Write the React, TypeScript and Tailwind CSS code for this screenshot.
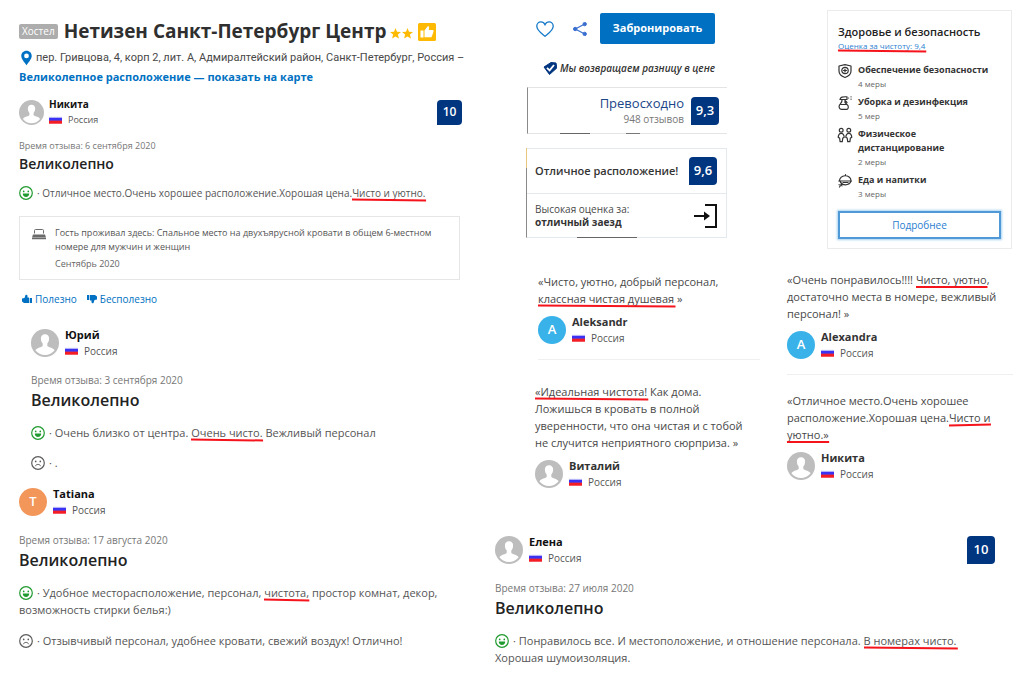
import type { ReactNode } from "react";

const POSITIVE = "text-[#1f9a2e]";
const NEGATIVE = "text-[#5c5c5c]";

function Mark({ children, tilt = 1 }: { children: ReactNode; tilt?: number }) {
  return (
    <span className="relative whitespace-nowrap">
      {children}
      <svg
        className="absolute top-full left-0 -mt-[2px] h-[4px] w-full overflow-visible"
        viewBox="0 0 100 4"
        preserveAspectRatio="none"
        aria-hidden="true"
      >
        <line x1="0" y1={2 - tilt / 2} x2="101" y2={2 + tilt / 2} stroke="#f5141c" strokeWidth="2" vectorEffect="non-scaling-stroke" />
      </svg>
    </span>
  );
}

function Flag() {
  return (
    <svg className="h-[8px] w-[13px] shrink-0" viewBox="0 0 14 8" aria-hidden="true">
      <rect width="14" height="8" fill="#f1f1fb" />
      <rect y="1.500" width="14" height="3.500" fill="#3a32f2" />
      <rect y="4.700" width="14" height="3.300" fill="#f51d24" />
    </svg>
  );
}

function Silhouette({ small }: { small?: boolean }) {
  return (
    <svg className={small ? "size-[25px] shrink-0" : "size-[28px] shrink-0"} viewBox="0 0 28 28" aria-hidden="true">
      <circle cx="14" cy="14" r="14" fill="#bdbdbd" />
      <path
        d="M14 5.2c-2.6 0-4.1 1.8-4.1 4.4 0 2.100.7 3.900 1.800 5v2c0 .8-.8 1.200-2.300 1.700-2.300.7-4.200 1.400-5 3a12 12 0 0 0 19.200 0c-.8-1.600-2.700-2.300-5-3-1.500-.5-2.300-.9-2.300-1.700v-2c1.100-1.100 1.800-2.900 1.800-5 0-2.600-1.500-4.400-4.100-4.400z"
        fill="#fff"
      />
    </svg>
  );
}

function Initial({ letter, color }: { letter: string; color: string }) {
  return (
    <span className={`flex size-[28px] shrink-0 items-center justify-center rounded-full text-[13px] font-semibold text-white ${color}`}>
      {letter}
    </span>
  );
}

function Person({ name, avatar, small, soft }: { name: string; avatar: ReactNode; small?: boolean; soft?: boolean }) {
  return (
    <div className={small ? "flex items-center gap-[5px]" : "flex items-center gap-[6px]"}>
      {avatar}
      <div className={small ? "leading-[15px]" : "leading-[16px]"}>
        <div className={`font-bold ${soft ? "text-[#333]" : "text-[#111]"} ${small ? "text-[10px]" : "text-[11px]"}`}>{name}</div>
        <div className={`flex items-center gap-[6px] text-[#555] ${small ? "text-[9px]" : "text-[10px]"}`}>
          <Flag />
          <span>Россия</span>
        </div>
      </div>
    </div>
  );
}

function Score({ value, small }: { value: string; small?: boolean }) {
  return (
    <span
      className={`flex shrink-0 items-center justify-center rounded-[4px] rounded-bl-none bg-[#003580] font-semibold text-white ${
        small ? "size-[25px] text-[12px]" : "size-[28px] text-[13px]"
      }`}
    >
      {value}
    </span>
  );
}

function Face({ sad }: { sad?: boolean }) {
  return (
    <svg
      className={`mr-[4px] inline-block size-[14px] -mt-[3px] ${sad ? NEGATIVE : POSITIVE}`}
      viewBox="0 0 14 14"
      fill="none"
      stroke="currentColor"
      aria-hidden="true"
    >
      <circle cx="7" cy="7" r="6.300" strokeWidth="1.200" />
      <circle cx="4.700" cy="5.400" r=".85" fill="currentColor" stroke="none" />
      <circle cx="9.300" cy="5.400" r=".85" fill="currentColor" stroke="none" />
      {sad ? (
        <path d="M4.300 10.200c.6-1.300 1.500-1.800 2.700-1.800s2.100.5 2.700 1.800" />
      ) : (
        <path d="M3.800 7.600h6.400c0 2-1.300 3.400-3.200 3.400s-3.200-1.400-3.200-3.400z" fill="currentColor" stroke="none" />
      )}
    </svg>
  );
}

function Comment({ sad, className, children }: { sad?: boolean; className: string; children: ReactNode }) {
  return (
    <p className={`text-[#555] ${className}`}>
      <Face sad={sad} />· {children}
    </p>
  );
}

function Quote({ lines, name, avatar }: { lines: ReactNode[]; name: string; avatar: ReactNode }) {
  return (
    <figure>
      <blockquote className="text-[11px] leading-[17px] text-[#484848]">
        {lines.map((line, i) => (
          <div key={i} className="whitespace-nowrap">
            {line}
          </div>
        ))}
      </blockquote>
      <figcaption className="mt-[7px]">
        <Person soft name={name} avatar={avatar} />
      </figcaption>
    </figure>
  );
}

function Measure({ icon, title, count }: { icon: ReactNode; title: ReactNode; count: string }) {
  return (
    <li className="flex gap-[6px]">
      <svg className="mt-px size-[14px] shrink-0 overflow-visible text-[#333]" viewBox="0 0 14 14" fill="none" stroke="currentColor" strokeWidth="1.200" strokeLinecap="round" strokeLinejoin="round" aria-hidden="true">
        {icon}
      </svg>
      <div>
        <div className="text-[9px] leading-[14px] font-bold whitespace-nowrap text-[#333]">{title}</div>
        <div className="text-[8px] leading-[13px] text-[#666]">{count}</div>
      </div>
    </li>
  );
}

function Thumb({ down }: { down?: boolean }) {
  return (
    <svg className={`size-[10px] ${down ? "rotate-180" : ""}`} viewBox="0 0 10 10" fill="currentColor" aria-hidden="true">
      <path d="M0 4.500 2.500 4l1-3Q5.500.3 5.500 2v1.500H7V9H2L0 7.500z" />
      <path d="M7.700 4H10v5H7.700z" />
    </svg>
  );
}

function HotelHeader() {
  return (
    <header>
      <div className="flex h-[30px] items-center whitespace-nowrap">
        <span className="rounded-[2px] bg-[#adadad] px-[3px] text-[10px] leading-[15px] text-white">Хостел</span>
        <h1 className="ml-[6px] text-[19px] leading-[30px] font-bold text-[#2f2f2f]">Нетизен Санкт-Петербург Центр</h1>
        <svg className="mt-[5px] ml-[4px] h-[11px] w-[23px]" viewBox="0 0 23 11" fill="#feba02" aria-hidden="true">
          <path d="m5.500 0 1.500 3.800 4 .2-3.100 2.600 1 4-3.400-2.200-3.400 2.200 1-4L0 4l4-.2z" />
          <path d="m17.500 0 1.500 3.800 4 .2-3.100 2.600 1 4-3.400-2.200-3.400 2.200 1-4L12 4l4-.2z" />
        </svg>
        <svg className="mt-[2px] ml-[5px] size-[18px]" viewBox="0 0 18 18" aria-hidden="true">
          <rect width="18" height="18" rx="1.500" fill="#feba02" />
          <path d="M2.500 7.500h3v7h-3zM6.500 7.500l3-4c.9-.5 1.800.2 1.600 1.200L10.800 7h3.700c1 0 1.400.9 1 1.700l-1.700 4.700c-.2.600-.7.900-1.300.900h-6z" fill="#fff" />
        </svg>
      </div>
      <div className="mt-[3px] flex items-center gap-[4px] font-[Roboto,sans-serif] text-[11px] leading-[18px] whitespace-nowrap text-[#484848]">
        <svg className="ml-[2px] h-[16px] w-[11px] shrink-0" viewBox="0 0 12 16" aria-hidden="true">
          <path d="M6 0C2.500 0 .3 2.500.3 5.700.3 9 3.500 12 6 16c2.500-4 5.700-7 5.700-10.300C11.700 2.500 9.500 0 6 0z" fill="#0071c2" />
          <circle cx="6" cy="5.700" r="2.600" fill="#fff" />
        </svg>
        <span>пер. Гривцова, 4, корп 2, лит. А, Адмиралтейский район, Санкт-Петербург, Россия –</span>
      </div>
      <a href="#map" className="block text-[11px] leading-[20px] font-bold text-[#0071c2]">
        Великолепное расположение — показать на карте
      </a>
    </header>
  );
}

function Reviews() {
  return (
    <>
      <article className="mt-[10px]">
        <div className="flex items-center justify-between">
          <Person small name="Никита" avatar={<Silhouette small />} />
          <Score small value="10" />
        </div>
        <div className="mt-[11px] text-[9px] leading-[16px] text-[#777]">Время отзыва: 6 сентября 2020</div>
        <h2 className="text-[14px] leading-[20px] font-semibold text-[#222]">Великолепно</h2>
        <Comment className="mt-[11px] text-[10px] leading-[17px] whitespace-nowrap">
          Отличное место.Очень хорошее расположение.Хорошая цена.<Mark>Чисто и уютно.</Mark>
        </Comment>
        <div className="mt-[14px] mr-[2px] flex gap-[9px] border border-[#e6e6e6] pt-[9px] pb-[8px] pl-[12px] text-[9px] leading-[14px] text-[#666]">
          <svg className="mt-[3px] h-[11px] w-[14px] shrink-0" viewBox="0 0 14 11" fill="none" stroke="#6b6b6b" aria-hidden="true">
            <path d="M2.500 4.500v-3q0-1 1-1h7q1 0 1 1v3" />
            <path d="M1 5.500h12L14 8.500H0z" fill="#6b6b6b" stroke="none" />
            <path d="M0 9.500h14" strokeWidth="1.500" />
          </svg>
          <div>
            <div className="font-medium whitespace-nowrap text-[#555]">
              Гость проживал здесь: Спальное место на двухъярусной кровати в общем 6-местном
              <br />
              номере для мужчин и женщин
            </div>
            <div className="mt-[3px]">Сентябрь 2020</div>
          </div>
        </div>
        <div className="mt-[11px] ml-[3px] flex gap-[10px] text-[10px] leading-[16px] text-[#0071c2]">
          <button type="button" className="flex items-center gap-[3px]"><Thumb />Полезно</button>
          <button type="button" className="flex items-center gap-[3px]"><Thumb down />Бесполезно</button>
        </div>
      </article>

      <article className="mt-[20px] ml-[12px]">
        <Person name="Юрий" avatar={<Silhouette />} />
        <div className="mt-[13px] text-[10px] leading-[16px] text-[#777]">Время отзыва: 3 сентября 2020</div>
        <h2 className="mt-[2px] text-[16px] leading-[20px] font-semibold text-[#222]">Великолепно</h2>
        <Comment className="mt-[14px] text-[11px] leading-[18px]">
          Очень близко от центра. <Mark>Очень чисто.</Mark> Вежливый персонал
        </Comment>
        <Comment sad className="mt-[12px] text-[11px] leading-[18px]">.</Comment>
      </article>

      <article className="mt-[14px]">
        <Person name="Tatiana" avatar={<Initial letter="T" color="bg-[#f2965a]" />} />
        <div className="mt-[14px] text-[10px] leading-[16px] text-[#777]">Время отзыва: 17 августа 2020</div>
        <h2 className="mt-[2px] text-[16px] leading-[20px] font-semibold text-[#222]">Великолепно</h2>
        <Comment className="mt-[14px] text-[11px] leading-[17px] whitespace-nowrap">
          Удобное месторасположение, персонал, <Mark>чистота,</Mark> простор комнат, декор,
          <br />
          возможность стирки белья:)
        </Comment>
        <Comment sad className="mt-[14px] text-[11px] leading-[17px]">
          Отзывчивый персонал, удобнее кровати, свежий воздух! Отлично!
        </Comment>
      </article>
    </>
  );
}

function BookingPanel() {
  return (
    <section className="w-[201px]">
      <div className="flex items-center justify-end gap-[13px] pt-[13px] pr-[12px]">
        <button type="button" aria-label="Сохранить" className="mr-[6px]">
          <svg className="h-[16px] w-[18px]" viewBox="0 0 18 16" fill="none" stroke="#1479c9" strokeWidth="1.300" aria-hidden="true">
            <path d="M9 15.200C5.500 12.300.8 9.300.8 5.200.8 2.700 2.600.9 4.900.9 6.800.9 8.200 2 9 3.700 9.800 2 11.200.9 13.100.9c2.300 0 4.100 1.800 4.100 4.300 0 4.100-4.700 7.100-8.200 10z" />
          </svg>
        </button>
        <button type="button" aria-label="Поделиться">
          <svg className="size-[14px]" viewBox="0 0 14 14" fill="#3a6fd0" stroke="#3a6fd0" aria-hidden="true">
            <path d="M11.700 2 2.300 7l9.400 5" fill="none" strokeWidth="1.200" />
            <circle cx="11.700" cy="2.100" r="1.700" />
            <circle cx="2.200" cy="7" r="1.700" />
            <circle cx="11.700" cy="11.900" r="1.700" />
          </svg>
        </button>
        <button type="button" className="h-[31px] w-[115px] rounded-[2px] bg-[#0071c2] text-[11px] font-bold text-white">
          Забронировать
        </button>
      </div>
      <div className="mt-[15px] mr-[12px] flex items-center justify-end gap-[3px] text-[10px] leading-[18px] font-semibold whitespace-nowrap text-[#333] italic">
        <svg className="h-[13px] w-[14px]" viewBox="0 0 14 13" aria-hidden="true">
          <path d="M1 5 8 .5 13 1l.8 5L6.500 12.500z" fill="#003580" stroke="#003580" strokeLinejoin="round" />
          <path d="m4 5.800 2.600 2.600L11 3" fill="none" stroke="#fff" strokeWidth="1.800" />
        </svg>
        Мы возвращаем разницу в цене
      </div>
      <div className="relative mt-[10px] ml-[1px] flex h-[47px] items-center justify-end gap-[7px] border border-r-0 border-[#e4e4e4] border-l-[#8a8a8a] pr-[8px]">
        <div className="text-right">
          <div className="text-[13px] leading-[17px] text-[#1b4688]">Превосходно</div>
          <div className="text-[10px] leading-[14px] text-[#777]">948 отзывов</div>
        </div>
        <Score value="9,3" />
        <span className="absolute -bottom-px left-[32px] h-px w-[30px] bg-[#666]" />
        <span className="absolute -bottom-px left-[98px] h-px w-[14px] bg-[#777]" />
      </div>
      <div className="relative mt-[14px] border border-[#e4e9ee] border-l-[#8a8a8a]">
        <span className="absolute -top-px -left-px h-[20px] w-px bg-[#e8c77a]" />
        <span className="absolute -bottom-px left-[50px] h-px w-[60px] bg-[#666]" />
        <div className="flex h-[45px] items-center justify-between border-b border-[#e4e9ee] pr-[9px] pl-[8px] text-[11px] font-semibold whitespace-nowrap text-[#333]">
          Отличное расположение!
          <Score value="9,6" />
        </div>
        <div className="flex h-[43px] items-center justify-between pr-[9px] pl-[8px] text-[10px] leading-[13px] text-[#484848]">
          <div>
            <div>Высокая оценка за:</div>
            <div className="font-bold text-[#333]">отличный заезд</div>
          </div>
          <svg className="h-[24px] w-[24px]" viewBox="0 0 24 24" aria-hidden="true">
            <path d="M12 1h11v22H12M1 12h12" fill="none" stroke="#111" strokeWidth="2" />
            <path d="m11 7.500 6 4.500-6 4.500z" fill="#111" />
          </svg>
        </div>
      </div>
    </section>
  );
}

function HealthPanel() {
  return (
    <section className="mt-[10px] flex h-[239px] w-[185px] flex-col border border-[#ebebeb] px-[10px] pt-[13px] pb-[9px]">
      <h2 className="text-[11px] leading-[15px] font-semibold whitespace-nowrap text-[#222]">Здоровье и безопасность</h2>
      <a href="#cleanliness" className="text-[8px] leading-[14px] text-[#2a80d0]">
        <Mark>Оценка за чистоту: 9,4</Mark>
      </a>
      <ul className="mt-[10px] flex flex-col gap-[5px]">
        <Measure
          title="Обеспечение безопасности"
          count="4 меры"
          icon={
            <>
              <path d="M7 .6 13 2v5c0 3-2.500 5.300-6 6.500C3.500 12.300 1 10 1 7V2z" />
              <circle cx="7" cy="6.500" r="3.200" />
              <path d="M7 5v3M5.500 6.500h3" />
            </>
          }
        />
        <Measure
          title="Уборка и дезинфекция"
          count="5 мер"
          icon={
            <>
              <path d="M2 3.200C3 1 4 .6 9 .8v2.700H2zM4 3.500C4.500 6 3 7 1.500 9c-1 2 0 4.400 2 4.400h4.800c1.700 0 2.500-2 1.700-3.700L7 6.500V3.500M7 4.500l2 2M3 8.500h5.500" />
              <path d="M10.500 2h.1M13 .8h.1M13 3.200h.1" />
            </>
          }
        />
        <Measure
          title={<>Физическое<br />дистанцирование</>}
          count="2 меры"
          icon={
            <>
              <circle cx="3.200" cy="2.300" r="1.900" />
              <circle cx="10.800" cy="2.300" r="1.900" />
              <path d="M3.200 5.400C1.300 5.400.4 6.800.2 9.400l1.400.6.500 3.600h2.200l.5-3.600 1.400-.6C6 6.800 5.100 5.400 3.200 5.400zM10.800 5.400c-1.900 0-2.800 1.400-3 4l1.400.6.5 3.600h2.200l.5-3.600 1.400-.6c-.2-2.600-1.100-4-3-4z" />
            </>
          }
        />
        <Measure
          title="Еда и напитки"
          count="3 меры"
          icon={
            <>
              <path d="M1.500 7a5.500 4.800 0 0 1 11.500-.5M.8 7h12.700M7.500 1V.6M2 7.300c1 2.500 3 3.500 5.500 3.500S12 9.500 13 7.300M4 9.500 1.500 13M1 10.800l3 1" />
              <path d="M5 8.500h5" />
            </>
          }
        />
      </ul>
      <button type="button" className="mt-auto h-[28px] w-full border-2 border-[#4f9ad6] text-[10px] text-[#2a80d0] shadow-[0_0_2px_1px_#a9d2f2]">
        Подробнее
      </button>
    </section>
  );
}

export default function App() {
  return (
    <main className="flex justify-between bg-white pr-[11px] pl-[19px] font-['Open_Sans','Noto_Sans',sans-serif]">
      <div className="w-[443px] shrink-0 pt-[16px]">
        <HotelHeader />
        <Reviews />
      </div>

      <div className="w-[518px] shrink-0">
        <div className="flex items-start justify-between pr-px pl-[31px]">
          <BookingPanel />
          <HealthPanel />
        </div>

        <div className="mt-[22px] grid grid-cols-[222px_226px] justify-between pl-[43px]">
          <div className="pt-[2px]">
            <Quote
              lines={["«Чисто, уютно, добрый персонал,", <><Mark>классная чистая душевая</Mark> »</>]}
              name="Aleksandr"
              avatar={<Initial letter="A" color="bg-[#38b2e8]" />}
            />
            <hr className="mt-[13px] mb-[23px] border-[#efefef]" />
            <div className="-ml-[3px]">
              <Quote
                lines={[
                  <><Mark>«Идеальная чистота!</Mark> Как дома.</>,
                  "Ложишься в кровать в полной",
                  "уверенности, что она чистая и с тобой",
                  "не случится неприятного сюрприза. »",
                ]}
                name="Виталий"
                avatar={<Silhouette />}
              />
            </div>
          </div>
          <div>
            <Quote
              lines={[<>«Очень понравилось!!!! <Mark tilt={0}>Чисто, уютно</Mark>,</>, "достаточно места в номере, вежливый", "персонал! »"]}
              name="Alexandra"
              avatar={<Initial letter="A" color="bg-[#38b2e8]" />}
            />
            <hr className="mt-[13px] mb-[17px] border-[#efefef]" />
            <Quote
              lines={["«Отличное место.Очень хорошее", <>расположение.Хорошая цена.<Mark tilt={-1}>Чисто и</Mark></>, <Mark tilt={0}>уютно.»</Mark>]}
              name="Никита"
              avatar={<Silhouette />}
            />
          </div>
        </div>

        <article className="mt-[44px] pr-[18px]">
          <div className="flex items-center justify-between">
            <Person name="Елена" avatar={<Silhouette />} />
            <Score value="10" />
          </div>
          <div className="mt-[14px] text-[10px] leading-[16px] text-[#777]">Время отзыва: 27 июля 2020</div>
          <h2 className="mt-[2px] text-[16px] leading-[20px] font-semibold text-[#222]">Великолепно</h2>
          <Comment className="mt-[14px] text-[11px] leading-[17px] whitespace-nowrap">
            Понравилось все. И местоположение, и отношение персонала. <Mark>В номерах чисто.</Mark>
            <br />
            Хорошая шумоизоляция.
          </Comment>
        </article>
      </div>
    </main>
  );
}
